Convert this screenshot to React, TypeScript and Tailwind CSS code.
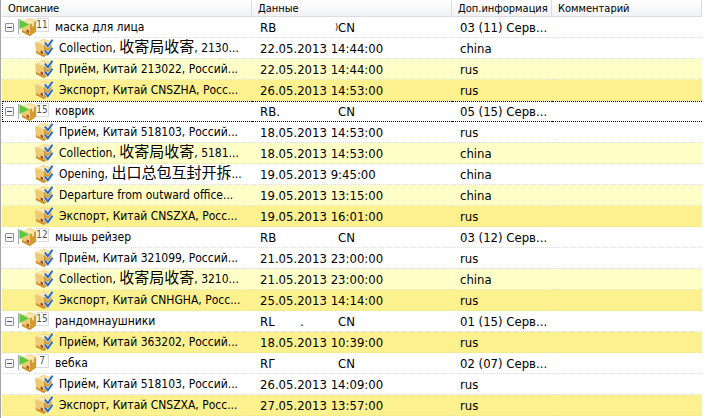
import React from 'react';
import clsx from 'clsx';

type Shade = 'white' | 'pale' | 'gold';

interface TrackEvent {
  title: string;
  han?: string;
  tail?: string;
  date: string;
  info: string;
  shade: Shade;
}

interface Parcel {
  name: string;
  badge: string;
  code: string;
  mark?: string;
  rest?: string;
  info: string;
  focused?: boolean;
  events: TrackEvent[];
}

const PARCELS: Parcel[] = [
  {
    name: 'маска для лица', badge: '11', code: 'RB', rest: ')', info: '03 (11) Серв...',
    events: [
      { title: 'Collection, ', han: '收寄局收寄', tail: ', 2130...', date: '22.05.2013 14:44:00', info: 'china', shade: 'white' },
      { title: 'Приём, Китай 213022, Россий...', date: '22.05.2013 14:44:00', info: 'rus', shade: 'pale' },
      { title: 'Экспорт, Китай CNSZHA, Росс...', date: '26.05.2013 14:53:00', info: 'rus', shade: 'gold' },
    ],
  },
  {
    name: 'коврик', badge: '15', code: 'RB.', info: '05 (15) Серв...', focused: true,
    events: [
      { title: 'Приём, Китай 518103, Россий...', date: '18.05.2013 14:53:00', info: 'rus', shade: 'white' },
      { title: 'Collection, ', han: '收寄局收寄', tail: ', 5181...', date: '18.05.2013 14:53:00', info: 'china', shade: 'pale' },
      { title: 'Opening, ', han: '出口总包互封开拆', tail: '...', date: '19.05.2013 9:45:00', info: 'china', shade: 'white' },
      { title: 'Departure from outward office...', date: '19.05.2013 13:15:00', info: 'china', shade: 'pale' },
      { title: 'Экспорт, Китай CNSZXA, Росс...', date: '19.05.2013 16:01:00', info: 'rus', shade: 'gold' },
    ],
  },
  {
    name: 'мышь рейзер', badge: '12', code: 'RB', info: '03 (12) Серв...',
    events: [
      { title: 'Приём, Китай 321099, Россий...', date: '21.05.2013 23:00:00', info: 'rus', shade: 'white' },
      { title: 'Collection, ', han: '收寄局收寄', tail: ', 3210...', date: '21.05.2013 23:00:00', info: 'china', shade: 'pale' },
      { title: 'Экспорт, Китай CNHGHA, Росс...', date: '25.05.2013 14:14:00', info: 'rus', shade: 'gold' },
    ],
  },
  {
    name: 'рандомнаушники', badge: '15', code: 'RL', mark: '.', info: '01 (15) Серв...',
    events: [
      { title: 'Приём, Китай 363202, Россий...', date: '18.05.2013 10:39:00', info: 'rus', shade: 'gold' },
    ],
  },
  {
    name: 'вебка', badge: '7', code: 'RГ', info: '02 (07) Серв...',
    events: [
      { title: 'Приём, Китай 518103, Россий...', date: '26.05.2013 14:09:00', info: 'rus', shade: 'white' },
      { title: 'Экспорт, Китай CNSZXA, Росс...', date: '27.05.2013 13:57:00', info: 'rus', shade: 'gold' },
    ],
  },
];

const SHADES: Record<Shade, string> = {
  white: 'bg-white',
  pale: 'bg-[#ffffc8]',
  gold: 'bg-[#fdf08e]',
};

const BoxShape: React.FC = () => (
  <>
    <path d="M0.3 3.5 L8.5 0 L16.5 2.5 L16 13 L9 18 L1 14 Z" fill="#edc765" />
    <path d="M0.3 3.5 L8.5 0 L16.5 2.5 L9 6.5 Z" fill="#f8e1a0" />
    <path d="M0.3 3.5 L9 6.5 V18 L1 14 Z" fill="#efca74" />
    <path d="M9 6.5 L16.5 2.5 L16 13 L9 18 Z" fill="#d29a30" />
    <path d="M3 2.4 L11.3 5.3 V8.8 L12.8 8 V4.5 L4.6 1.7 Z" fill="#fdf2cb" />
    <path d="M0.9 12 L9 16 V18 L1 14 Z" fill="#c98f2c" />
    <path d="M5.6 11.5 L8 12.5 V15.3 L5.6 14 Z" fill="#a8482a" />
  </>
);

const FlagBoxIcon: React.FC = () => (
  <svg width="20" height="18" viewBox="0 0 20 18" aria-hidden="true" className="shrink-0">
    <g transform="translate(3 0)"><BoxShape /></g>
    <path d="M0.5 1 V16" stroke="#a8b0b4" strokeWidth="1.2" />
    <path d="M1.5 1.5 L11 6.5 L1.5 11 Z" fill="#5cc63c" stroke="#92dc7c" strokeWidth="0.6" />
  </svg>
);

const CheckedBoxIcon: React.FC = () => (
  <svg width="19" height="18" viewBox="0 0 19 18" aria-hidden="true" className="shrink-0">
    <BoxShape />
    <g fill="none">
      <path d="M9.8 3.5 L12.8 7.2 L17.5 0.8" stroke="#e4ecf4" strokeWidth="3" />
      <path d="M9.8 11.5 L12.8 15.2 L17.5 8.8" stroke="#e4ecf4" strokeWidth="3" />
      <path d="M9.8 3.5 L12.8 7.2 L17.5 0.8" stroke="#2467b8" strokeWidth="1.9" />
      <path d="M9.8 11.5 L12.8 15.2 L17.5 8.8" stroke="#2467b8" strokeWidth="1.9" />
    </g>
  </svg>
);

const HeaderCell: React.FC<{ children: string }> = ({ children }) => (
  <th scope="col" className="h-[17px] p-0 pt-px pl-1.5 border-r border-b border-[#d9dce0] bg-linear-to-b from-white to-[#f1f2f5] text-left font-normal text-[11px] leading-[15px]">
    {children}
  </th>
);

const ParcelRow: React.FC<{ parcel: Parcel }> = ({ parcel }) => {
  const cell = clsx('h-[21px] p-0 border-b border-dotted', parcel.focused ? 'border-t border-black' : 'border-[#e0e0e0]');
  return (
    <tr className="bg-white">
      <td className={clsx(cell, parcel.focused && 'border-l')}>
        <div className={clsx('flex items-center pr-1', parcel.focused ? 'h-[19px] pl-0.5' : 'h-5 pl-[3px]')}>
          <button type="button" aria-label={`Свернуть ${parcel.name}`} className="mr-1 flex size-[9px] shrink-0 items-center justify-center rounded-[1px] border border-[#8f9296] bg-[#f6f6f4]">
            <span className="h-px w-[5px] bg-[#31549b]" />
          </button>
          <FlagBoxIcon />
          <span className="-ml-0.5 mb-1 h-[14px] w-[13px] shrink-0 border border-l-0 border-[#dcdcdc] bg-white/80 text-center text-[10px] leading-[12px] text-[#555]">{parcel.badge}</span>
          <span className="ml-1.5 truncate">{parcel.name}</span>
        </div>
      </td>
      <td className={clsx(cell, 'pl-2 text-[13px]')}>
        <div className="flex">
          <span className="w-10">{parcel.code}</span>
          <span className="w-[35px]">{parcel.mark}</span>
          <span className="w-[3px] text-[9px]">{parcel.rest}</span>
          <span>CN</span>
        </div>
      </td>
      <td className={clsx(cell, 'pl-2 text-[13px]')}>{parcel.info}</td>
      <td className={cell} />
    </tr>
  );
};

const EventRow: React.FC<{ event: TrackEvent }> = ({ event }) => {
  const cell = 'h-[21px] p-0 border-b border-dotted border-[#dedede]';
  return (
    <tr className={SHADES[event.shade]}>
      <td className={cell}>
        <div className="flex h-5 items-center gap-[5px] pl-[33px]">
          <CheckedBoxIcon />
          <span>
            {event.title}
            {event.han && <span className="text-[15px] leading-none">{event.han}</span>}
            {event.tail}
          </span>
        </div>
      </td>
      <td className={clsx(cell, 'pl-2 text-[13px]')}>{event.date}</td>
      <td className={clsx(cell, 'pl-2 text-[13px]')}>{event.info}</td>
      <td className={cell} />
    </tr>
  );
};

const App: React.FC = () => (
  <main className="min-h-screen border-l border-[#a5a5a5] bg-white pl-px pr-[3px] font-['DejaVu_Sans_Condensed','Noto_Sans_CJK_SC',sans-serif] text-[12px] leading-[19px] text-black">
    <table className="w-full table-fixed border-separate border-spacing-0 whitespace-nowrap">
      <colgroup>
        <col className="w-[250px]" />
        <col className="w-[200px]" />
        <col className="w-[100px]" />
        <col />
      </colgroup>
      <thead>
        <tr>
          <HeaderCell>Описание</HeaderCell>
          <HeaderCell>Данные</HeaderCell>
          <HeaderCell>Доп.информация</HeaderCell>
          <HeaderCell>Комментарий</HeaderCell>
        </tr>
      </thead>
      <tbody>
        {PARCELS.map((parcel) => (
          <React.Fragment key={parcel.name}>
            <ParcelRow parcel={parcel} />
            {parcel.events.map((event, idx) => (
              <EventRow key={idx} event={event} />
            ))}
          </React.Fragment>
        ))}
      </tbody>
    </table>
  </main>
);

export default App;
